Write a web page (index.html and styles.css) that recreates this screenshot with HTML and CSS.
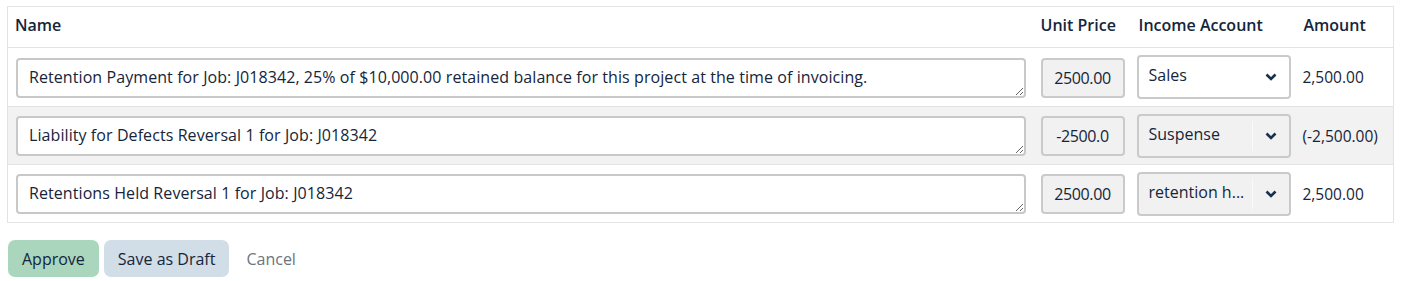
FILE: index.html
```html
<!DOCTYPE html>
<html>
  <head>
    <meta charset="UTF-8" />
    <title>Invoice lines</title>
    <link rel="stylesheet" href="styles.css">
  </head>
  <body>
    <table class="lines">
      <colgroup>
        <col class="col-name" />
        <col class="col-price" />
        <col class="col-account" />
        <col />
      </colgroup>
      <thead>
        <tr>
          <th class="cell-name">Name</th>
          <th class="cell-price">Unit Price</th>
          <th class="cell-account">Income Account</th>
          <th class="cell-amount">Amount</th>
        </tr>
      </thead>
      <tbody>
        <tr>
          <td class="cell-name">
            <textarea class="line-name" rows="1">Retention Payment for Job: J018342, 25% of $10,000.00 retained balance for this project at the time of invoicing.</textarea>
          </td>
          <td class="cell-price"><div class="price">2500.00</div></td>
          <td class="cell-account">
            <div class="account">
              <span class="account-label">Sales</span>
              <span class="account-arrow">
                <svg width="12" height="8" viewBox="0 0 12 8"><polyline points="1.5,1.5 6,6 10.5,1.5" fill="none" stroke="#16324c" stroke-width="2.6" /></svg>
              </span>
            </div>
          </td>
          <td class="cell-amount">2,500.00</td>
        </tr>
        <tr class="alt">
          <td class="cell-name">
            <textarea class="line-name" rows="1">Liability for Defects Reversal 1 for Job: J018342</textarea>
          </td>
          <td class="cell-price"><div class="price">-2500.0</div></td>
          <td class="cell-account">
            <div class="account locked">
              <span class="account-label">Suspense</span>
              <span class="account-arrow">
                <svg width="12" height="8" viewBox="0 0 12 8"><polyline points="1.5,1.5 6,6 10.5,1.5" fill="none" stroke="#16324c" stroke-width="2.6" /></svg>
              </span>
            </div>
          </td>
          <td class="cell-amount">(-2,500.00)</td>
        </tr>
        <tr>
          <td class="cell-name">
            <textarea class="line-name" rows="1">Retentions Held Reversal 1 for Job: J018342</textarea>
          </td>
          <td class="cell-price"><div class="price">2500.00</div></td>
          <td class="cell-account">
            <div class="account locked">
              <span class="account-label">retention h...</span>
              <span class="account-arrow">
                <svg width="12" height="8" viewBox="0 0 12 8"><polyline points="1.5,1.5 6,6 10.5,1.5" fill="none" stroke="#16324c" stroke-width="2.6" /></svg>
              </span>
            </div>
          </td>
          <td class="cell-amount">2,500.00</td>
        </tr>
      </tbody>
    </table>

    <div class="actions">
      <button class="btn approve">Approve</button>
      <button class="btn draft">Save as Draft</button>
      <button class="btn cancel">Cancel</button>
    </div>
  </body>
</html>
```

FILE: styles.css
```css
body {
  margin: 6px 7px;
  font-family: "Open Sans", "Noto Sans", sans-serif;
  font-size: 16px;
  color: #15253a;
  background-color: #fff;
}

.lines {
  width: 1387px;
  border-collapse: collapse;
  table-layout: fixed;
  border: 1px solid #e3e3e6;
}

.col-name {
  width: 1025px;
}

.col-price {
  width: 98px;
}

.col-account {
  width: 165px;
}

.lines th {
  height: 35px;
  padding: 0 0 5px 8px;
  text-align: left;
  font-weight: 600;
  font-size: 16px;
  border-bottom: 1px solid #e3e3e6;
}

.lines th.cell-name {
  padding-left: 7px;
}

.lines td {
  height: 57px;
  padding: 0;
  border-bottom: 1px solid #e3e3e6;
  vertical-align: middle;
}

.lines tbody tr:first-child td {
  height: 58px;
}

.lines tr.alt td {
  background-color: #f2f2f2;
}

td.cell-name {
  padding-left: 8px;
  padding-right: 6px;
}

td.cell-price {
  padding-left: 8px;
}

td.cell-account {
  padding-left: 6px;
}

td.cell-amount {
  padding-left: 7px;
  font-size: 15.5px;
}

.line-name {
  display: block;
  box-sizing: border-box;
  width: 1010px;
  height: 40px;
  margin: 1px 0 0 0;
  padding: 7px 11px;
  border: 2px solid #c8c8c8;
  border-radius: 4px;
  font-family: inherit;
  font-size: 16px;
  letter-spacing: 0.08px;
  color: inherit;
  line-height: 20px;
  overflow: hidden;
  white-space: nowrap;
  resize: vertical;
}

.price {
  box-sizing: border-box;
  width: 84px;
  height: 40px;
  margin-top: 1px;
  display: flex;
  align-items: center;
  justify-content: center;
  background-color: #f1f1f1;
  border: 2px solid #cacaca;
  border-radius: 4px;
  font-size: 16px;
  letter-spacing: -0.4px;
}

.account {
  box-sizing: border-box;
  width: 154px;
  height: 44px;
  display: flex;
  align-items: center;
  background-color: #fff;
  border: 2px solid #cacaca;
  border-radius: 4px;
}

.account.locked {
  background-color: #f1f1f1;
}

.account-label {
  flex: 1;
  padding: 0 0 4px 10px;
  white-space: nowrap;
}

.account-arrow {
  display: flex;
  align-items: center;
  justify-content: center;
  width: 36px;
  height: 30px;
}

.account.locked .account-arrow {
  border-left: 1px solid #fafafa;
}

.actions {
  display: flex;
  align-items: center;
  gap: 5px;
  margin-top: 17px;
  margin-left: 1px;
}

.btn {
  height: 37px;
  padding: 0 14px;
  border: none;
  border-radius: 7px;
  font-family: inherit;
  font-size: 16px;
  color: #15253a;
  cursor: pointer;
}

.btn.approve {
  background-color: #a9d6bc;
}

.btn.draft {
  background-color: #d1dde7;
}

.btn.cancel {
  padding: 0 12px;
  background-color: transparent;
  color: #6b7580;
}
```
